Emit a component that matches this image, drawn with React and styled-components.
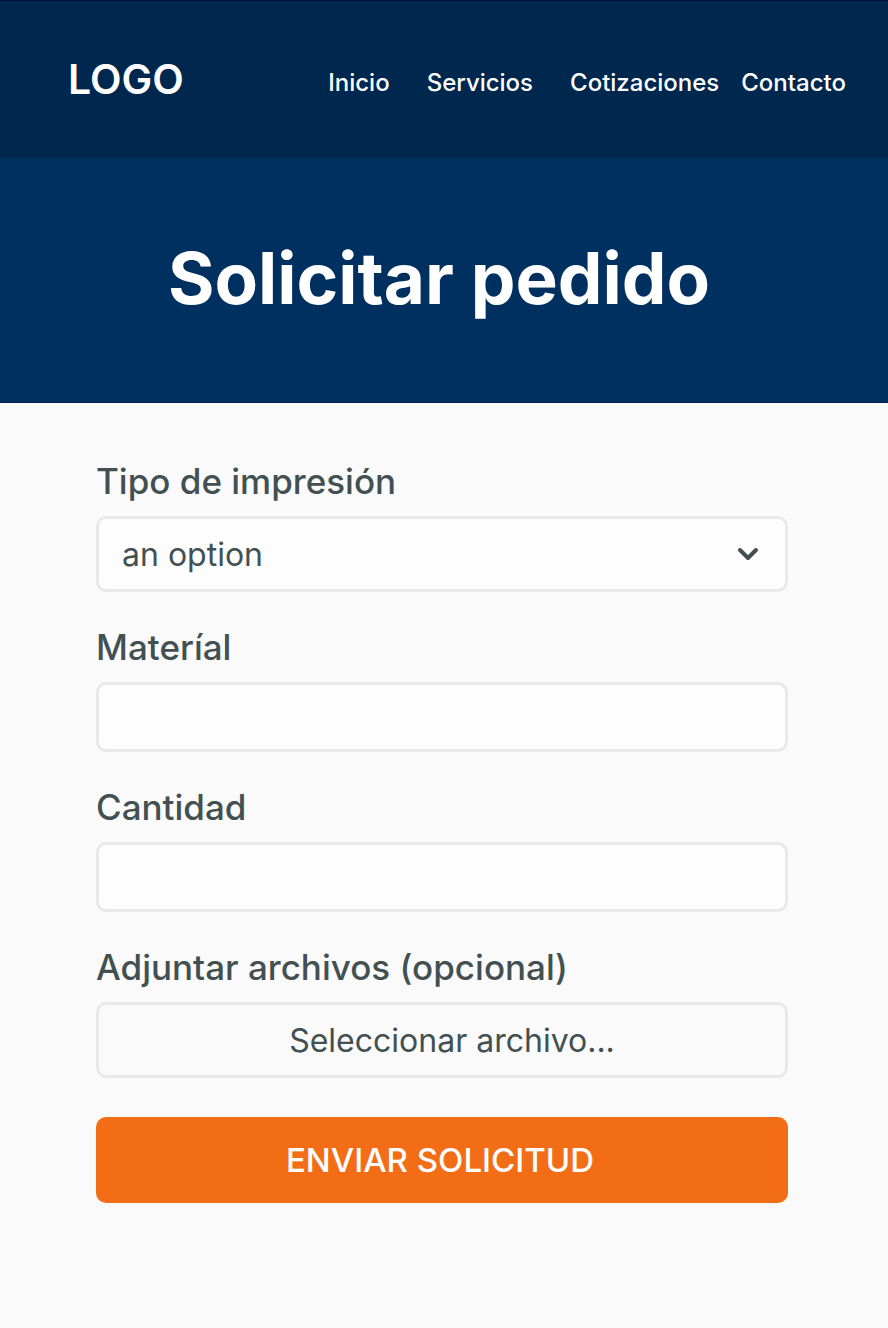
import React from "react";
import styled, { createGlobalStyle } from "styled-components";
import { ChevronDown } from "lucide-react";

const Global = createGlobalStyle`
  *, *::before, *::after { box-sizing: border-box; }
  body {
    margin: 0;
    background: #fafafa;
    color: #435052;
    font-family: Inter, "Liberation Sans", sans-serif;
  }
  button, input, select { font: inherit; color: inherit; }
`;

const Header = styled.header`
  display: flex;
  align-items: center;
  justify-content: space-between;
  min-height: 158px;
  padding: 0 42px 2px 68px;
  border-top: 1px solid #000f3d;
  background: #00274e;
  color: #fff;
`;

const Logo = styled.a`
  font-size: 41px;
  line-height: 48px;
  font-weight: 600;
  color: inherit;
  text-decoration: none;
`;

const Nav = styled.nav`
  display: flex;
  gap: 22px;
  padding-top: 8px;
`;

const NavGroup = styled.div`
  display: flex;
  gap: 37px;
`;

const NavLink = styled.a`
  font-size: 24px;
  line-height: 32px;
  font-weight: 500;
  color: inherit;
  text-decoration: none;
`;

const Hero = styled.section`
  padding: 72px 34px 76px 24px;
  border-bottom: 1px solid #001c50;
  background: #003060;
  text-align: center;
`;

const Title = styled.h1`
  margin: 0;
  font-size: 71px;
  line-height: 96px;
  font-weight: 700;
  color: #fff;
`;

const Form = styled.form`
  display: flex;
  flex-direction: column;
  gap: 39px;
  padding: 62px 100px 124px 96px;
`;

const Field = styled.div`
  display: flex;
  flex-direction: column;
  gap: 19px;
`;

const Label = styled.label`
  font-size: 35px;
  line-height: 32px;
  font-weight: 500;
`;

const Control = styled.input`
  width: 100%;
  height: 70px;
  padding: 0 23px;
  border: 3px solid #e8e9e9;
  border-radius: 10px;
  background: #fdfdfd;
  font-size: 32px;
`;

const SelectWrap = styled.div`
  display: grid;
  align-items: center;
  & > * { grid-area: 1 / 1; }
  & > svg { justify-self: end; margin-right: 24px; pointer-events: none; }
`;

const Select = styled.select`
  width: 100%;
  height: 76px;
  padding: 0 23px;
  border: 3px solid #e8e9e9;
  border-radius: 10px;
  background: #fdfdfd;
  font-size: 32px;
  appearance: none;
`;

const FileButton = styled.button`
  height: 76px;
  padding: 0 0 0 20px;
  border: 3px solid #e8e9e9;
  border-radius: 10px;
  background: #fafafa;
  font-size: 32px;
`;

const Submit = styled.button`
  height: 86px;
  padding: 0 4px 0 0;
  border: 0;
  border-radius: 10px;
  background: #f36d16;
  color: #fff;
  font-size: 33px;
  font-weight: 500;
`;

export default function App() {
  return (
    <>
      <Global />
      <Header>
        <Logo href="#">LOGO</Logo>
        <Nav>
          <NavGroup>
            <NavLink href="#inicio">Inicio</NavLink>
            <NavLink href="#servicios">Servicios</NavLink>
            <NavLink href="#cotizaciones">Cotizaciones</NavLink>
          </NavGroup>
          <NavLink href="#contacto">Contacto</NavLink>
        </Nav>
      </Header>
      <main>
        <Hero>
          <Title>Solicitar pedido</Title>
        </Hero>
        <Form onSubmit={(e) => e.preventDefault()}>
          <Field>
            <Label htmlFor="tipo">Tipo de impresión</Label>
            <SelectWrap>
              <Select id="tipo">
                <option>an option</option>
              </Select>
              <ChevronDown size={32} strokeWidth={3} aria-hidden="true" />
            </SelectWrap>
          </Field>
          <Field>
            <Label htmlFor="material">Materíal</Label>
            <Control id="material" type="text" />
          </Field>
          <Field>
            <Label htmlFor="cantidad">Cantidad</Label>
            <Control id="cantidad" type="text" inputMode="numeric" />
          </Field>
          <Field>
            <Label htmlFor="archivo">Adjuntar archivos (opcional)</Label>
            <FileButton id="archivo" type="button">Seleccionar archivo...</FileButton>
          </Field>
          <Submit type="submit">ENVIAR SOLICITUD</Submit>
        </Form>
      </main>
    </>
  );
}
